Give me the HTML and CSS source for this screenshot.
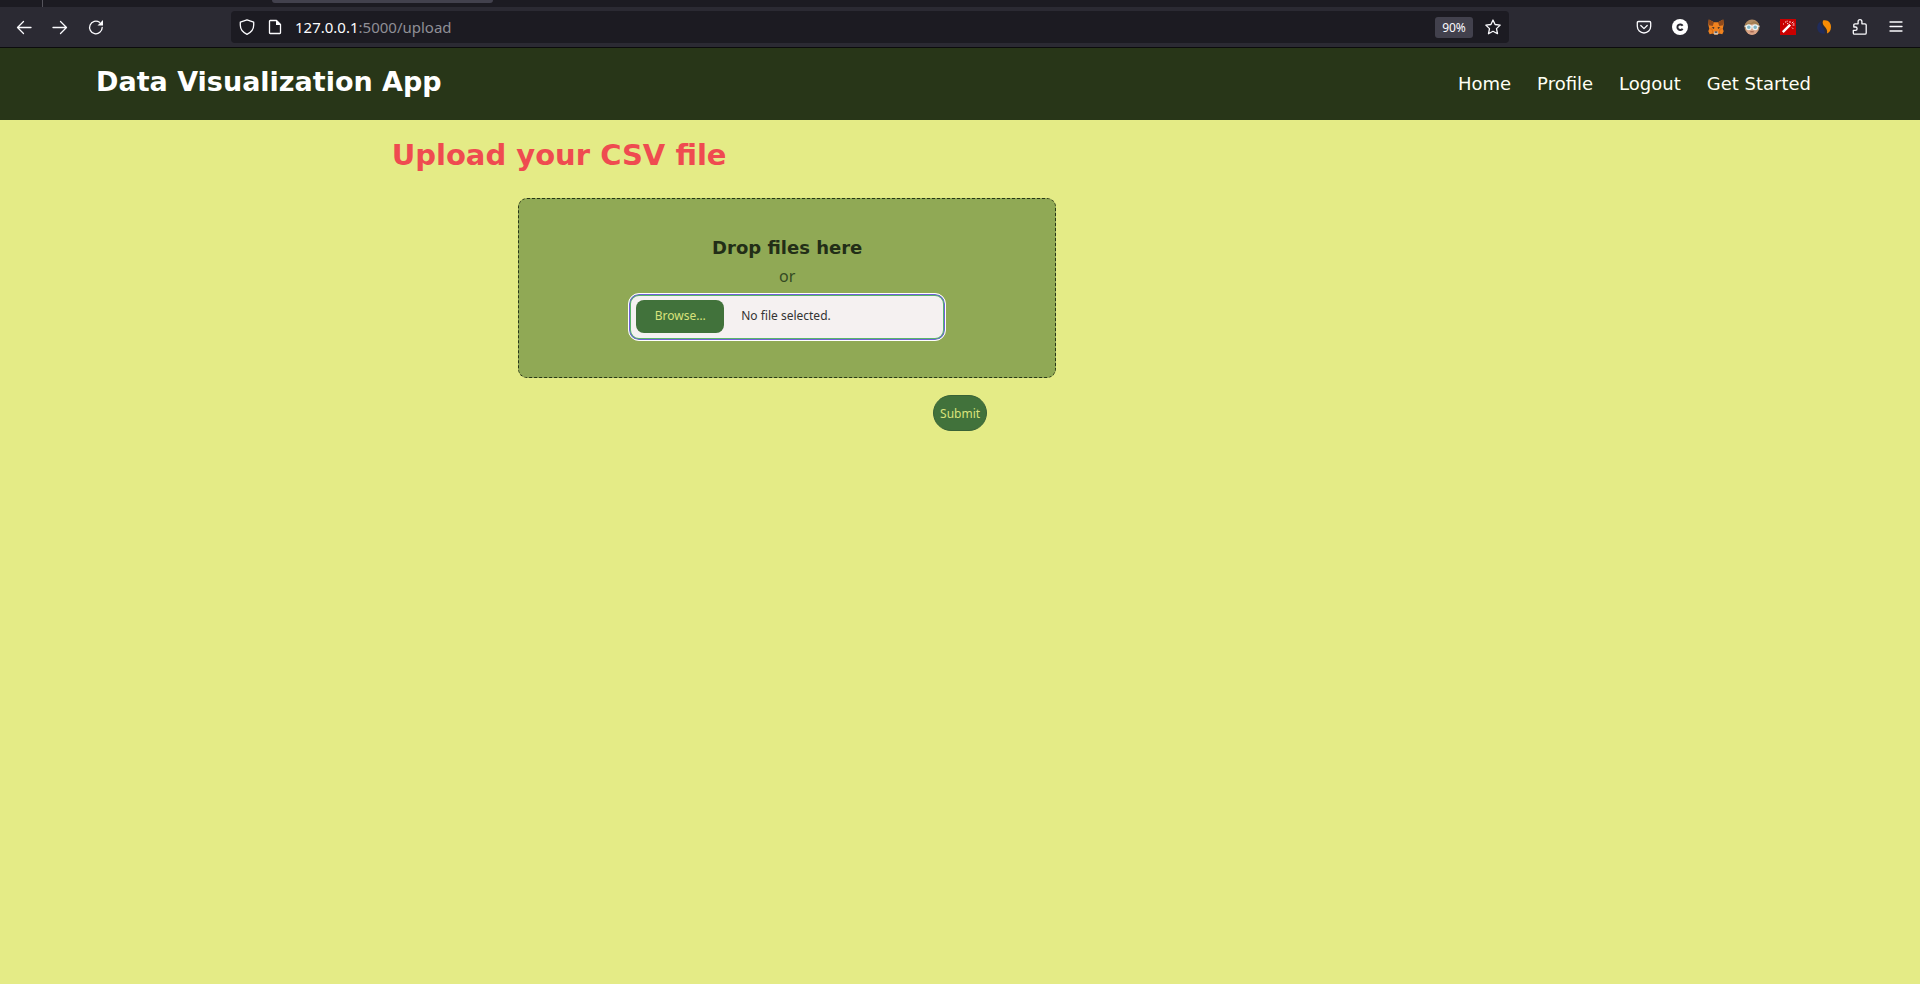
FILE: index.html
```html
<!DOCTYPE html>
<html lang="en">
<head>
<meta charset="utf-8">
<title>Data Visualization App</title>
<link rel="stylesheet" href="styles.css">
</head>
<body>
<div class="browser">
  <div class="tabstrip"><span class="tab-divider"></span><span class="tab-active"></span></div>
  <div class="toolbar">
    <div class="tools">
      <button class="tool" aria-label="Back"><svg viewBox="0 0 16 16"><path d="M15 8.500H1.500M7.500 2.500l-6 6 6 6" class="line"/></svg></button>
      <button class="tool" aria-label="Forward"><svg viewBox="0 0 16 16"><path d="M1 8.500h13.500M8.500 2.500l6 6-6 6" class="line"/></svg></button>
      <button class="tool" aria-label="Reload"><svg viewBox="0 0 16 16"><path d="M14.200 8.500A6.300 6.300 0 1 1 11.500 3.300" class="line"/><path d="M15 1v5.500H9.500z" class="solid"/></svg></button>
    </div>
    <div class="urlbar">
      <svg class="icon" viewBox="0 0 16 16"><path d="M8 .8 14.700 3.200V6c0 4.300-2.500 7.400-6.700 9.300C3.800 13.400 1.300 10.300 1.300 6V3.200z" class="line"/></svg>
      <svg class="icon" viewBox="0 0 16 16"><path d="M3.500 1.500h6l4 4v8.300q0 .7-.7.700H3.200q-.7 0-.7-.7V2.200q0-.7.7-.7z" class="line"/><path d="M9 1l5 5H9z" class="solid"/></svg>
      <p class="address"><span class="host">127.0.0.1</span>:5000/upload</p>
      <button class="zoom-level">90%</button>
      <button class="star" aria-label="Bookmark this page"><svg class="icon" viewBox="0 0 16 16"><path d="M8 1l2.100 4.500 5.100.6-3.700 3.500 1 5.100L8 12.300l-4.500 2.400 1-5.100L.8 6.100l5.100-.6z" class="line"/></svg></button>
    </div>
    <div class="tools">
      <button class="tool" aria-label="Save to Pocket"><svg viewBox="0 0 16 16"><path d="M2.500 2.500h11q1.200 0 1.200 1.200v3.600a6.700 6.700 0 0 1-13.400 0V3.700q0-1.200 1.200-1.200zM4.800 6.500 8 9.600l3.200-3.100" class="line"/></svg></button>
      <button class="tool" aria-label="C extension"><svg viewBox="0 0 16 16"><circle cx="8" cy="8" r="8" fill="#fff"/><path d="M10.600 6.700A2.800 2.800 0 1 0 10.600 9.700" fill="none" stroke="#2b2a33" stroke-width="2"/></svg></button>
      <button class="tool" aria-label="Wallet"><svg viewBox="0 0 16 16"><path d="M.8.500 6 3.300h4L15.200.500l.5 5-.9 4.300.9 2.500-1.400 3-3.300-.8-1.600 1.200H6.600L5 14.500l-3.300.8-1.400-3 .9-2.500L.3 5.500z" fill="#f0821e"/><path d="M.8.500 6 3.300 4.700 7 1 6.300.3 4zM15.200.500 10 3.300 11.300 7l3.700-.7.700-2.300z" fill="#8f4a1c"/><path d="M3.600 8.500 6.300 8 6 10zM12.400 8.500 9.700 8l.3 2z" fill="#37302d"/><path d="M6 12.500h4l.3 2.200-.8.900h-3l-.8-.9z" fill="#cfc5bd"/><path d="M6.700 12.500h2.600v1.200H6.700z" fill="#2c2f39"/><path d="M1.200 9.800 4 10l1 4.500M14.800 9.800 12 10l-1 4.500" fill="none" stroke="#c96316" stroke-width=".7"/></svg></button>
      <button class="tool" aria-label="Profile extension"><svg viewBox="0 0 16 16"><circle cx="8" cy="8" r="7.500" fill="#b08a62"/><path d="M2 7.500Q8 2.500 14 7.500V10a6 6 0 0 1-12 0z" fill="#dba486"/><path d="M1.500 5Q7 6 10 3l4.700 2.500" fill="none" stroke="#a27e50" stroke-width="1.500"/><path d="M.5 7.200h15" stroke="#eef2f2" stroke-width="1.200"/><circle cx="4.800" cy="8.200" r="2.400" fill="#7fb4c4" stroke="#edf4f4" stroke-width="1.200"/><circle cx="11.200" cy="8.200" r="2.400" fill="#7fb4c4" stroke="#edf4f4" stroke-width="1.200"/><path d="M6.300 12.800h3.400" stroke="#965540"/></svg></button>
      <button class="tool" aria-label="Magic wand"><svg viewBox="0 0 16 16"><path fill="#c90000" d="M0 0h16v16H0z"/><path d="M2.800 13.200 9.800 6.200" stroke="#fff" stroke-width="2.400"/><path d="M9 5l2 2M10 2v2M12.500 6h2M11.700 4.300l1.600-1.600M5 3h1.300M7 4.600h1.300M3 5h1M12 8.600l1.200 1.200M6.700 2.200h1M13.300 4.300h1" stroke="#ffd8d8" stroke-width="1"/></svg></button>
      <button class="tool" aria-label="Swirl extension"><svg viewBox="0 0 16 16"><path d="M5.500 2C3 7 8.500 7.500 9 14.500 4 15.500 1 12 1.200 8 1.400 5 3 3 5.500 2z" fill="#202c5c"/><path d="M7 1.500c5-1.300 8.200 2.500 8 6.700-.2 3.300-1.500 5.300-4 6.300C12.500 8 5 7.500 7 1.500z" fill="#f68b05"/></svg></button>
      <button class="tool" aria-label="Extensions"><svg viewBox="0 0 16 16"><path d="M2 15.200h11q1.200 0 1.200-1.200V6q0-1.200-1.200-1.200H9.900V2.600a1.900 1.900 0 0 0-3.800 0v2.200H3Q1.800 4.800 1.800 6v2h1.600a1.700 1.700 0 0 1 0 3.400H1.300V14q0 1.200 1.200 1.200z" class="line"/></svg></button>
      <button class="tool" aria-label="Menu"><svg viewBox="0 0 16 16"><path d="M2 3h12M2 7.500h12M2 12h12" class="line"/></svg></button>
    </div>
  </div>
</div>
<header class="header">
  <h1 class="brand">Data Visualization App</h1>
  <nav class="nav">
    <a href="#">Home</a><a href="#">Profile</a><a href="#">Logout</a><a href="#">Get Started</a>
  </nav>
</header>
<main>
  <h2 class="title">Upload your CSV file</h2>
  <form class="upload">
    <div class="drop">
      <h3 class="drop-title">Drop files here</h3>
      <p class="or">or</p>
      <label class="file">
        <input class="file-input" type="file" accept=".csv">
        <span class="browse">Browse…</span>
        <span>No file selected.</span>
      </label>
    </div>
    <button class="submit" type="submit">Submit</button>
  </form>
</main>
</body>
</html>
```
FILE: styles.css
```css
* { box-sizing: border-box; }
body { margin: 0; min-height: 100vh; background: #e4eb86; font-family: "DejaVu Sans", sans-serif; }
h1, h2, h3, p { margin: 0; }
button { font: inherit; color: inherit; background: none; border: 0; padding: 0; }

.browser { font-family: "Noto Sans", sans-serif; color: #fbfbfe; background: #2b2a33; border-bottom: 1px solid #0c0c0d; }
.tabstrip { display: flex; height: 7px; background: #1c1b22; align-items: flex-start; }
.tab-divider { width: 1px; height: 7px; margin-left: 42px; background: #55545c; }
.tab-active { width: 221px; height: 3px; margin-left: 229px; background: #42414d; border-radius: 0 0 4px 4px; }
.toolbar { display: flex; align-items: center; justify-content: space-between; height: 40px; padding: 0 6px; }
.tools { display: flex; }
.tool { display: grid; place-items: center; width: 36px; height: 32px; }
.tool svg, .icon { display: block; width: 16px; height: 16px; }
.line { fill: none; stroke: #fbfbfe; stroke-width: 1.3; stroke-linecap: round; stroke-linejoin: round; }
.solid { fill: #fbfbfe; }
.urlbar { display: flex; align-items: center; flex: 1; height: 32px; margin: 0 117px; padding: 0 8px; gap: 12px; background: #1c1b22; border-radius: 4px; }
.address { flex: 1; font-size: 15px; line-height: 20px; color: #8f8f96; }
.host { color: #fbfbfe; }
.zoom-level { width: 38px; height: 21px; font-size: 12px; background: #42414d; border-radius: 3px; }

.header { display: flex; align-items: center; justify-content: space-between; height: 72px; padding: 0 109px 0 96px; background: #283618; color: #fff; }
.brand { font-size: 27px; line-height: 32px; padding-bottom: 4px; }
.nav { display: flex; gap: 26px; }
.nav a { font-size: 18px; line-height: 24px; color: #fffff5; text-decoration: none; }

.title { padding: 17px 0 0 20.4%; font-size: 29px; line-height: 36px; color: #ef4b50; }
.upload { display: flex; flex-direction: column; align-items: flex-start; padding-top: 25px; }
.drop { display: flex; flex-direction: column; align-items: center; width: 28%; height: 180px; margin-left: 27%; padding-top: 37px; color: #344a23; background: #90a955; border: 1px dashed #283618; border-radius: 9px; }
.drop-title { font-size: 18px; line-height: 24px; color: #222e17; }
.or { padding: 6px 0 7px; font: 16px/20px "Noto Sans", sans-serif; }
.file { position: relative; display: flex; align-items: flex-start; gap: 17px; width: 318px; height: 48px; padding: 6px 5px; font: 12px/16px "Noto Sans", sans-serif; color: #333; background: #f5f1f1; border: 1px solid #fff; border-radius: 11px; box-shadow: inset 0 0 0 1px #7161d8, inset 0 0 0 2px #58b56b; }
.file-input { position: absolute; inset: 0; width: 100%; opacity: 0; }
.file span { padding: 8px 0 9px; }
.file .browse { width: 88px; margin-left: 2px; text-align: center; color: #d9e37c; background: #41723b; border-radius: 8px; }
.submit { width: 54px; height: 36px; margin: 17px 0 0 48.6%; padding-top: 1px; font: 12px/16px "Noto Sans", sans-serif; color: #d9e37c; background: #41723b; border: 1px solid #386236; border-radius: 18px; }
```
